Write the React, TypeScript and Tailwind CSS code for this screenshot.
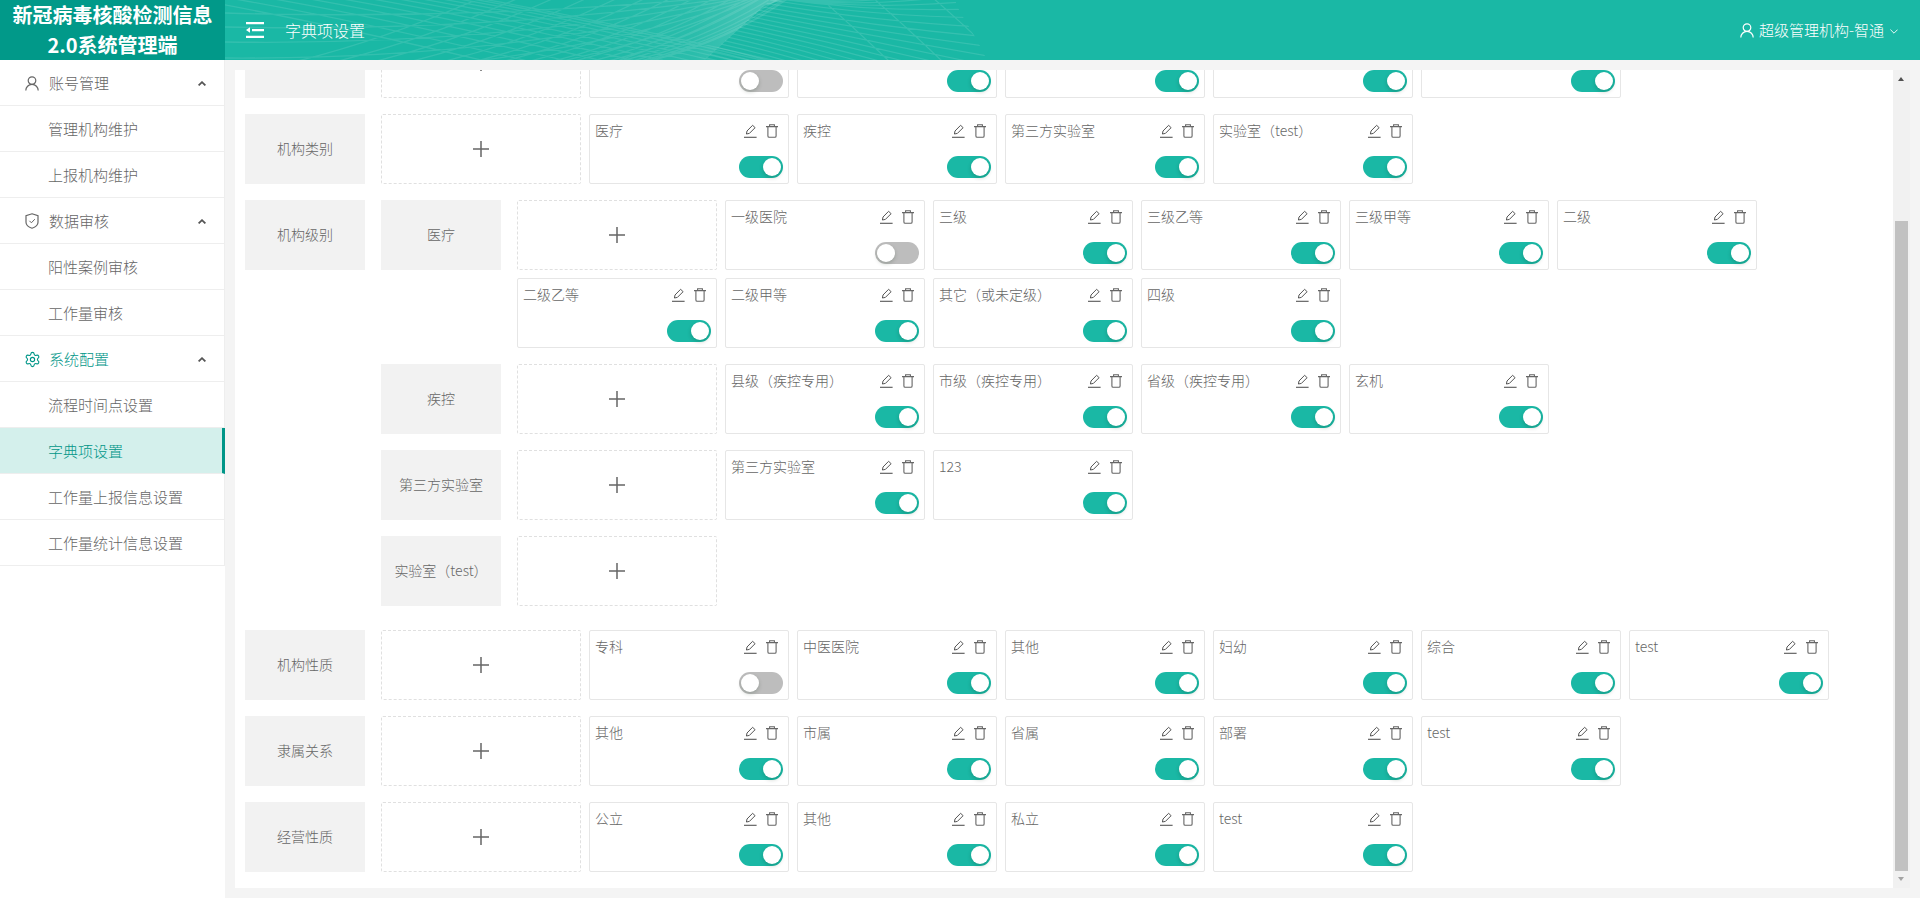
import type { ReactNode } from "react";
import { Settings } from "lucide-react";

interface DictItem {
  name: string;
  off?: boolean;
}

interface SubGroup {
  label: string;
  items: DictItem[];
}

const on = (names: string[]): DictItem[] => names.map((name) => ({ name }));

const nested: SubGroup[] = [
  {
    label: "医疗",
    items: [
      { name: "一级医院", off: true },
      ...on(["三级", "三级乙等", "三级甲等", "二级", "二级乙等", "二级甲等", "其它（或未定级）", "四级"]),
    ],
  },
  { label: "疾控", items: on(["县级（疾控专用）", "市级（疾控专用）", "省级（疾控专用）", "玄机"]) },
  { label: "第三方实验室", items: on(["第三方实验室", "123"]) },
  { label: "实验室（test）", items: [] },
];

function buildPattern() {
  const wide: string[] = [];
  // long arcs converging on the bright spot
  [13, 27, 42, 58, 76, 96, 120].forEach((y, i) => {
    wide.push(`M225 ${y} Q${500 + i * 10} ${y + 8 - i * 2} ${770} -8`);
  });
  // falling curves from the top
  for (let i = 0; i < 12; i++) {
    const x = 175 + i * (44 - i * 1.6);
    wide.push(`M${x} -4 Q${x + 130} 18 ${x + 340} 68`);
  }
  // rising curves from the bottom
  for (let i = 0; i < 18; i++) {
    const x = 285 + i * (42 - i * 1.25);
    wide.push(`M${x} 64 Q${x + 95} 42 ${x + 205 - i * 3} -6`);
  }
  const fine: string[] = [];
  // fine fan on the right side
  for (let i = -8; i < 20; i++) {
    const t = i * 3.4;
    const sx = t < 6 ? 770 - t : 770 - t * 1.1;
    const sy = Math.max(t, -2);
    fine.push(`M${sx} ${sy} Q${880} ${sy + 18 + i * 1.4} ${1010} ${18 + i * 10.5}`);
  }
  // a few crossing strands
  [820, 873, 933].forEach((x) => fine.push(`M${x} -2 Q${x + 30} 24 ${x + 70} 62`));
  return { wide: wide.join(" "), fine: fine.join(" ") };
}

const pattern = buildPattern();

function HeaderPattern() {
  return (
    <svg className="absolute left-[225px] top-0 h-[60px] w-[775px]" viewBox="225 0 775 60" fill="none">
      <defs>
        <clipPath id="pat-clip">
          <polygon points="225,0 955,0 960,12 968,25 977,40 987,60 225,60" />
        </clipPath>
        <linearGradient id="pat-glow" x1="0" x2="1" y1="0" y2="0">
          <stop offset="0" stopColor="#fff" stopOpacity="0" />
          <stop offset="0.6" stopColor="#fff" stopOpacity="0.07" />
          <stop offset="1" stopColor="#fff" stopOpacity="0.24" />
        </linearGradient>
      </defs>
      <g clipPath="url(#pat-clip)">
        <polygon points="560,0 782,0 764,6 705,60 560,60" fill="url(#pat-glow)" />
        <path d={pattern.wide} stroke="#fff" strokeOpacity="0.11" strokeWidth="1.3" />
        <path d={pattern.fine} stroke="#fff" strokeOpacity="0.12" strokeWidth="1.2" />
      </g>
    </svg>
  );
}

function MenuIcon() {
  return (
    <svg width="18" height="16" viewBox="0 0 18 16" className="shrink-0">
      <path d="M0 0h18v2.2H0zM6 7h12v2.2H6zM0 13.8h18V16H0zM4 5.2v5.6L0 8z" fill="#fff" />
    </svg>
  );
}

function UserIcon({ className }: { className?: string }) {
  return (
    <svg width="14" height="15" viewBox="0 0 14 15" fill="none" stroke="currentColor" strokeWidth="1.2" className={className}>
      <circle cx="7" cy="4.6" r="3.8" />
      <path d="M.8 14.6c0-3.4 2.6-6.2 6.2-6.2s6.2 2.8 6.2 6.2" />
    </svg>
  );
}

function ShieldIcon() {
  return (
    <svg width="14" height="16" viewBox="0 0 14 16" fill="none" stroke="#666" strokeWidth="1.2">
      <path d="M7 .8l6 2v6.4c0 2.6-3 5-6 6-3-1-6-3.4-6-6V2.8z" />
      <path d="M4.4 7.8l2 2 3.4-3.6" strokeWidth="1" />
    </svg>
  );
}

function CaretUp() {
  return (
    <svg width="8" height="5" viewBox="0 0 8 5" fill="none" stroke="#555" strokeWidth="1.8">
      <path d="M.6 4.4L4 1.2l3.4 3.2" />
    </svg>
  );
}

function PencilIcon() {
  return (
    <svg width="13" height="14" viewBox="0 0 13 14" fill="none" stroke="#555" strokeWidth="1">
      <path d="M2.4 10l.6-3L8.6 1.3l2.5 2.4L5.4 9.4z" />
      <path d="M0 13.3h12.6" strokeWidth="1.1" />
    </svg>
  );
}

function TrashIcon() {
  return (
    <svg width="12" height="14" viewBox="0 0 12 14" fill="none" stroke="#666" strokeWidth="1.1">
      <path d="M0 2.6h12M3.6 2.4V.7h4.8v1.7M1.9 2.8v9.2c0 .8.4 1.3 1.2 1.3h5.8c.8 0 1.2-.5 1.2-1.3V2.8" />
    </svg>
  );
}

function Switch({ off }: { off?: boolean }) {
  return (
    <div className={`relative h-[22px] w-[44px] rounded-full ${off ? "bg-[#bdbdbd]" : "bg-[#1ab8a5]"}`}>
      <span
        className={`absolute top-[2px] h-[18px] w-[18px] rounded-full bg-white shadow-[0_2px_4px_rgba(0,35,11,0.2)] ${off ? "left-[2px]" : "right-[2px]"}`}
      />
    </div>
  );
}

function DictCard({ item }: { item: DictItem }) {
  return (
    <div className="flex h-[70px] w-[200px] flex-col justify-between rounded-[2px] border border-[#e6e6e6] bg-white p-[5px]">
      <div className="flex h-[22px] items-center">
        <span className="flex-1 truncate pb-[2px] text-[14px] font-light text-[#666]">{item.name}</span>
        <span className="mr-[5px] flex items-center gap-[9px]">
          <PencilIcon />
          <TrashIcon />
        </span>
      </div>
      <div className="flex justify-end">
        <Switch off={item.off} />
      </div>
    </div>
  );
}

function AddBox() {
  return (
    <div className="flex h-[70px] w-[200px] items-center justify-center rounded-[2px] border border-dashed border-[#e0e0e0] bg-white">
      <svg width="16" height="16" viewBox="0 0 16 16" stroke="#666" strokeWidth="1.5">
        <path d="M0 8h16M8 0v16" />
      </svg>
    </div>
  );
}

function Label({ children }: { children?: ReactNode }) {
  return (
    <div className="mr-4 flex h-[70px] w-[120px] shrink-0 items-center justify-center bg-[#f2f2f2] pb-[1px] text-[14px] font-light text-[#666]">
      {children}
    </div>
  );
}

function CardList({ items }: { items: DictItem[] }) {
  return (
    <div className="mb-4 flex flex-1 flex-wrap gap-2">
      <AddBox />
      {items.map((item, i) => (
        <DictCard key={i} item={item} />
      ))}
    </div>
  );
}

function DictRow({ label, items }: { label?: string; items: DictItem[] }) {
  return (
    <div className="flex items-start">
      <Label>{label}</Label>
      <CardList items={items} />
    </div>
  );
}

function SideItem({
  text,
  icon,
  parent,
  active,
  accent,
  iconClass = "pl-[25px]",
}: {
  text: string;
  icon?: ReactNode;
  parent?: boolean;
  active?: boolean;
  accent?: boolean;
  iconClass?: string;
}) {
  return (
    <div
      className={`flex h-[46px] items-center border-b border-b-[#eee] pt-[1px] text-[15px] font-light ${
        active ? "border-r-[3px] border-r-[#009688] bg-[#d4f0ec]" : "border-r border-r-[#eee]"
      } ${accent || active ? "text-[#009688]" : "text-[#666]"}`}
    >
      {parent ? (
        <>
          <span className={`flex w-[49px] ${iconClass}`}>{icon}</span>
          <span className="flex-1">{text}</span>
          <span className="mr-[18px] flex">
            <CaretUp />
          </span>
        </>
      ) : (
        <span className="pl-[48px]">{text}</span>
      )}
    </div>
  );
}

export default function App() {
  return (
    <div className="flex h-[898px] w-[1920px] flex-col overflow-hidden bg-[#f4f4f4] font-['Noto_Sans_CJK_SC',sans-serif]">
      <header className="relative flex h-[60px] shrink-0 items-center bg-[#1ab8a5] text-white">
        <HeaderPattern />
        <div className="relative w-[225px] shrink-0 bg-[#019989] text-center text-[20px] font-bold leading-[30px]">
          <div>新冠病毒核酸检测信息</div>
          <div>2.0系统管理端</div>
        </div>
        <div className="relative ml-[21px] flex flex-1 items-center">
          <MenuIcon />
          <span className="ml-[21px] text-[16px] font-light">字典项设置</span>
        </div>
        <div className="relative mr-[22px] flex items-center text-[15px] font-light">
          <UserIcon className="mr-[5px]" />
          <span>超级管理机构-智通</span>
          <svg width="8" height="5" viewBox="0 0 8 5" fill="none" stroke="#fff" strokeWidth="0.9" className="ml-[6px] mt-[3px]">
            <path d="M.4.6L4 4.2 7.6.6" />
          </svg>
        </div>
      </header>

      <div className="flex min-h-0 flex-1">
        <aside className="w-[225px] shrink-0 bg-white">
          <SideItem parent text="账号管理" icon={<UserIcon className="text-[#666]" />} />
          <SideItem text="管理机构维护" />
          <SideItem text="上报机构维护" />
          <SideItem parent text="数据审核" icon={<ShieldIcon />} />
          <SideItem text="阳性案例审核" />
          <SideItem text="工作量审核" />
          <SideItem
            parent
            accent
            text="系统配置"
            iconClass="pl-[24px]"
            icon={<Settings size={17} strokeWidth={1.6} color="#009688" className="shrink-0" />}
          />
          <SideItem text="流程时间点设置" />
          <SideItem active text="字典项设置" />
          <SideItem text="工作量上报信息设置" />
          <SideItem text="工作量统计信息设置" />
        </aside>

        <main className="min-w-0 flex-1 p-[10px]">
          <div className="flex h-full bg-white">
            <div className="min-w-0 flex-1 overflow-hidden pl-[10px]">
              <div className="-mt-[42px]">
                <DictRow
                  items={[{ name: "", off: true }, { name: "" }, { name: "" }, { name: "" }, { name: "" }]}
                />
                <DictRow label="机构类别" items={on(["医疗", "疾控", "第三方实验室", "实验室（test）"])} />
                <div className="mb-2 flex items-start">
                  <Label>机构级别</Label>
                  <div className="min-w-0 flex-1">
                    {nested.map((g) => (
                      <DictRow key={g.label} label={g.label} items={g.items} />
                    ))}
                  </div>
                </div>
                <DictRow
                  label="机构性质"
                  items={[{ name: "专科", off: true }, ...on(["中医医院", "其他", "妇幼", "综合", "test"])]}
                />
                <DictRow label="隶属关系" items={on(["其他", "市属", "省属", "部署", "test"])} />
                <DictRow label="经营性质" items={on(["公立", "其他", "私立", "test"])} />
              </div>
            </div>

            <div className="relative w-[17px] shrink-0 bg-[#f1f1f1]">
              <span className="absolute left-[5px] top-[7px] h-0 w-0 border-x-[3.5px] border-b-[4px] border-x-transparent border-b-[#505050]" />
              <div className="absolute bottom-[17px] left-[2px] top-[151px] w-[13px] bg-[#c1c1c1]" />
              <span className="absolute bottom-[7px] left-[5px] h-0 w-0 border-x-[3.5px] border-t-[4px] border-x-transparent border-t-[#a3a3a3]" />
            </div>
          </div>
        </main>
      </div>
    </div>
  );
}
